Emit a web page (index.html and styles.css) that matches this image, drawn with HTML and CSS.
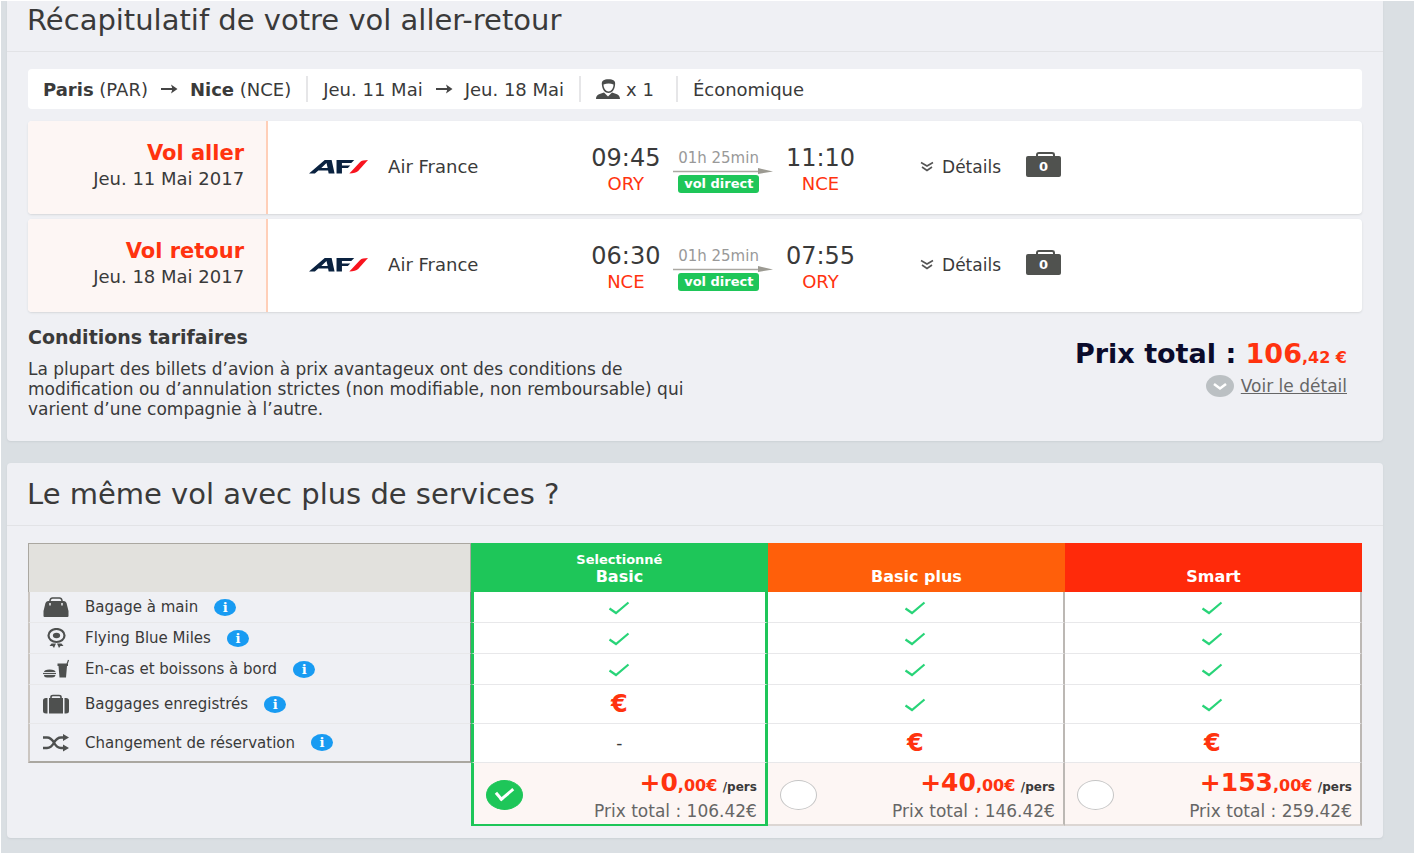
FILE: index.html
```html
<!DOCTYPE html>
<html lang="fr">
<head>
    <meta charset="UTF-8">
    <title>Récapitulatif de votre vol</title>
    <link rel="stylesheet" href="styles.css">
</head>
<body>

<!-- icons -->
<svg class="sprite" aria-hidden="true">
    <symbol id="arrow" viewBox="0 0 18 12">
        <path d="M1 6H14" stroke="#444" stroke-width="2"/>
        <path d="M11 1.500L17.500 6L11 10.500L12.500 6Z" fill="#444"/>
    </symbol>
    <symbol id="person" viewBox="0 0 24 20">
        <path d="M6 6.500C5 1.500 8 .3 12.500 .3C17 .3 20 1.500 19 6.500C18.500 11 16 14 12.500 14C9 14 6.500 11 6 6.500Z" fill="#4a4c4b"/>
        <path d="M7.500 5.500C11 4.200 14.500 4.200 17.500 5.500C17.500 9.500 15 12.500 12.500 12.500C10 12.500 7.500 9.500 7.500 5.500Z" fill="#fff"/>
        <path d="M0 20C0 15.500 4 14.800 8 13.500L12 17.500L16 13.500C20 14.800 24 15.500 24 20Z" fill="#4a4c4b"/>
    </symbol>
    <symbol id="airfrance" viewBox="0 0 60 14">
        <path d="M0 13.500L16 0H23L26 13.500H20L19.400 10.500H9.500L6 13.500ZM12.500 8H19L17.800 3Z" fill="#0a2240" fill-rule="evenodd"/>
        <path d="M28 0H46L43 3H33.500V5.500H42L39.500 8H33.500V13.500H28Z" fill="#0a2240"/>
        <path d="M41 13.500L52 2Q54 0 60 0L50 11Q47.500 13.500 41 13.500Z" fill="#f8141e"/>
    </symbol>
    <symbol id="chevrons" viewBox="0 0 14 12">
        <path d="M1 1.500L7 5L13 1.500M2 6L7 9.500L12 6" fill="none" stroke="#555" stroke-width="1.600"/>
    </symbol>
    <symbol id="line-arrow" viewBox="0 0 100 8">
        <path d="M0 4.500H86" stroke="#aaa8a2" stroke-width="1.500"/>
        <path d="M85 1L100 4.500L85 7Z" fill="#9c9a92"/>
    </symbol>
    <symbol id="check" viewBox="0 0 22 14">
        <path d="M1.500 7.500L8 12L20.500 1.500" fill="none" stroke="#28d478" stroke-width="2.200"/>
    </symbol>
    <symbol id="handbag" viewBox="0 0 25 20">
        <path d="M6.500 6V3.500Q7 1 9 1H16Q18 1 18.500 3.500V6" fill="none" stroke="#4e504f" stroke-width="1.500"/>
        <path d="M5 4H20Q23 4 23.500 8L25 14V19Q25 20 24 20H1Q0 20 0 19V14L1.500 8Q2 4 5 4Z" fill="#4e504f"/>
        <path d="M6.500 6V8.500M18.500 6V8.500" stroke="#eff0f4" stroke-width="1.500"/>
    </symbol>
    <symbol id="medal" viewBox="0 0 25 20">
        <ellipse cx="13" cy="7.500" rx="8" ry="6.500" fill="none" stroke="#4e504f" stroke-width="2.200"/>
        <ellipse cx="13" cy="7.500" rx="3.600" ry="2.800" fill="#4e504f"/>
        <path d="M8 15.500L6 18H9L10.500 20L12.500 15.500M18 15.500L20 18H17L15.500 20L13.500 15.500" fill="#4e504f"/>
    </symbol>
    <symbol id="snack" viewBox="0 0 26 18">
        <path d="M1 12Q1 9.500 6.500 9.500Q12.500 9.500 12.500 12Z" fill="#4e504f"/>
        <path d="M0 13.500H13" stroke="#4e504f" stroke-width="1.200"/>
        <path d="M1 15H12.500Q12 17.500 9 17.500H4Q1 17.500 1 15Z" fill="#4e504f"/>
        <path d="M14.500 3.500H25V6H24L23 17.500H16.500L15.500 6H14.500Z" fill="#4e504f"/>
        <path d="M24 4L25.500 0" stroke="#4e504f" stroke-width="1.200"/>
    </symbol>
    <symbol id="luggage" viewBox="0 0 26 19">
        <path d="M8 4V2.500Q8 1 10 1H16Q18 1 18 2.500V4" fill="none" stroke="#4e504f" stroke-width="1.600"/>
        <path d="M6 3.500H20V19H6Z" fill="#4e504f"/>
        <path d="M4.500 3.500H3Q0 3.500 0 6V16.500Q0 19 3 19H4.500ZM21.500 3.500H23Q26 3.500 26 6V16.500Q26 19 23 19H21.500Z" fill="#4e504f"/>
    </symbol>
    <symbol id="shuffle" viewBox="0 0 26 18">
        <path d="M0 3.500H4C12 3.500 10 14 18 14H21M0 14H4C12 14 10 3.500 18 3.500H21" fill="none" stroke="#4e504f" stroke-width="2.400"/>
        <path d="M20 0L26 3.500L20 7ZM20 10.500L26 14L20 17.500Z" fill="#4e504f"/>
    </symbol>
</svg>

<main>

    <section class="panel panel-first">
        <h1 class="panel-title">Récapitulatif de votre vol aller-retour</h1>
        <div class="panel-body">

            <div class="search-bar">
                <div class="search-item">
                    <span><strong>Paris</strong> (PAR)</span>
                    <svg class="icon-arrow"><use href="#arrow"/></svg>
                    <span><strong>Nice</strong> (NCE)</span>
                </div>
                <div class="search-item">
                    <span>Jeu. 11 Mai</span>
                    <svg class="icon-arrow"><use href="#arrow"/></svg>
                    <span>Jeu. 18 Mai</span>
                </div>
                <div class="search-item passengers">
                    <svg class="icon-person"><use href="#person"/></svg>
                    <span>x 1</span>
                </div>
                <div class="search-item">Économique</div>
            </div>

            <div class="flight">
                <div class="flight-day">
                    <h2>Vol aller</h2>
                    <p>Jeu. 11 Mai 2017</p>
                </div>
                <div class="airline">
                    <svg class="logo"><use href="#airfrance"/></svg>
                    <span>Air France</span>
                </div>
                <div class="route">
                    <div class="stop"><time>09:45</time><span>ORY</span></div>
                    <div class="duration">
                        <span>01h 25min</span>
                        <svg class="line-arrow"><use href="#line-arrow"/></svg>
                        <span class="direct">vol direct</span>
                    </div>
                    <div class="stop"><time>11:10</time><span>NCE</span></div>
                </div>
                <div class="extras">
                    <button type="button" class="details">
                        <svg class="icon-chevrons"><use href="#chevrons"/></svg>
                        Détails
                    </button>
                    <span class="suitcase">0</span>
                </div>
            </div>

            <div class="flight">
                <div class="flight-day">
                    <h2>Vol retour</h2>
                    <p>Jeu. 18 Mai 2017</p>
                </div>
                <div class="airline">
                    <svg class="logo"><use href="#airfrance"/></svg>
                    <span>Air France</span>
                </div>
                <div class="route">
                    <div class="stop"><time>06:30</time><span>NCE</span></div>
                    <div class="duration">
                        <span>01h 25min</span>
                        <svg class="line-arrow"><use href="#line-arrow"/></svg>
                        <span class="direct">vol direct</span>
                    </div>
                    <div class="stop"><time>07:55</time><span>ORY</span></div>
                </div>
                <div class="extras">
                    <button type="button" class="details">
                        <svg class="icon-chevrons"><use href="#chevrons"/></svg>
                        Détails
                    </button>
                    <span class="suitcase">0</span>
                </div>
            </div>

            <div class="summary">
                <div class="conditions">
                    <h3>Conditions tarifaires</h3>
                    <p>La plupart des billets d’avion à prix avantageux ont des conditions de<br>
                        modification ou d’annulation strictes (non modifiable, non remboursable) qui<br>
                        varient d’une compagnie à l’autre.</p>
                </div>
                <div class="total">
                    <p class="total-price">Prix total : <span class="red">106<small>,42 €</small></span></p>
                    <a href="#" class="see-details">
                        <svg class="icon-down" viewBox="0 0 28 22">
                            <ellipse cx="14" cy="11" rx="14" ry="11" fill="#bbc0c3"/>
                            <path d="M8 9L14 13.500L20 9" fill="none" stroke="#fff" stroke-width="2.500"/>
                        </svg>
                        <span>Voir le détail</span>
                    </a>
                </div>
            </div>
        </div>
    </section>

    <section class="panel">
        <h1 class="panel-title">Le même vol avec plus de services ?</h1>
        <div class="panel-body">
            <table class="offers">
                <thead>
                <tr>
                    <td class="corner"></td>
                    <th scope="col" class="basic"><small>Selectionné</small>Basic</th>
                    <th scope="col" class="plus">Basic plus</th>
                    <th scope="col" class="smart">Smart</th>
                </tr>
                </thead>
                <tbody>
                <tr>
                    <th scope="row">
                        <div class="service">
                            <svg><use href="#handbag"/></svg>
                            <span>Bagage à main</span>
                            <button type="button" class="info">i</button>
                        </div>
                    </th>
                    <td class="selected"><svg class="check"><use href="#check"/></svg></td>
                    <td><svg class="check"><use href="#check"/></svg></td>
                    <td><svg class="check"><use href="#check"/></svg></td>
                </tr>
                <tr>
                    <th scope="row">
                        <div class="service">
                            <svg><use href="#medal"/></svg>
                            <span>Flying Blue Miles</span>
                            <button type="button" class="info">i</button>
                        </div>
                    </th>
                    <td class="selected"><svg class="check"><use href="#check"/></svg></td>
                    <td><svg class="check"><use href="#check"/></svg></td>
                    <td><svg class="check"><use href="#check"/></svg></td>
                </tr>
                <tr>
                    <th scope="row">
                        <div class="service">
                            <svg><use href="#snack"/></svg>
                            <span>En-cas et boissons à bord</span>
                            <button type="button" class="info">i</button>
                        </div>
                    </th>
                    <td class="selected"><svg class="check"><use href="#check"/></svg></td>
                    <td><svg class="check"><use href="#check"/></svg></td>
                    <td><svg class="check"><use href="#check"/></svg></td>
                </tr>
                <tr class="tall">
                    <th scope="row">
                        <div class="service">
                            <svg><use href="#luggage"/></svg>
                            <span>Baggages enregistrés</span>
                            <button type="button" class="info">i</button>
                        </div>
                    </th>
                    <td class="selected euro">€</td>
                    <td><svg class="check"><use href="#check"/></svg></td>
                    <td><svg class="check"><use href="#check"/></svg></td>
                </tr>
                <tr class="tall last">
                    <th scope="row">
                        <div class="service">
                            <svg><use href="#shuffle"/></svg>
                            <span>Changement de réservation</span>
                            <button type="button" class="info">i</button>
                        </div>
                    </th>
                    <td class="selected">-</td>
                    <td class="euro">€</td>
                    <td class="euro">€</td>
                </tr>
                </tbody>
                <tfoot>
                <tr>
                    <td class="empty"></td>
                    <td class="selected">
                        <label class="choice">
                            <input type="radio" name="offer" checked>
                            <span class="choice-price">
                                <span><b>+0<small>,00€</small></b> <i>/pers</i></span>
                                <span>Prix total : 106.42€</span>
                            </span>
                        </label>
                    </td>
                    <td>
                        <label class="choice">
                            <input type="radio" name="offer">
                            <span class="choice-price">
                                <span><b>+40<small>,00€</small></b> <i>/pers</i></span>
                                <span>Prix total : 146.42€</span>
                            </span>
                        </label>
                    </td>
                    <td>
                        <label class="choice">
                            <input type="radio" name="offer">
                            <span class="choice-price">
                                <span><b>+153<small>,00€</small></b> <i>/pers</i></span>
                                <span>Prix total : 259.42€</span>
                            </span>
                        </label>
                    </td>
                </tr>
                </tfoot>
            </table>
        </div>
    </section>

</main>
</body>
</html>
```
FILE: styles.css
```css
* {
    box-sizing: border-box;
}

body {
    margin: 0;
    background-color: #dadfe3;
    border: 1px solid #fff;
    border-right: 0;
    font-family: "DejaVu Sans", Verdana, sans-serif;
    font-size: 17px;
    color: #3a3a3a;
}

h1, h2, h3, p {
    margin: 0;
}

button {
    font-family: inherit;
    border: 0;
    padding: 0;
    cursor: pointer;
}

.sprite {
    display: none;
}

main {
    padding: 0 31px 15px 6px;
}

/* panels */
.panel {
    background-color: #eff0f4;
    border-radius: 4px;
    box-shadow: 0 1px 2px #ccd1d5;
    margin-bottom: 22px;
}

.panel:last-child {
    margin-bottom: 0;
}

.panel-first {
    border-radius: 0 0 4px 4px;
}

.panel-title {
    font-size: 29px;
    line-height: 62px;
    font-weight: normal;
    padding: 0 20px;
    border-bottom: 1px solid #e2e3e6;
}

.panel-first .panel-title {
    line-height: 38px;
    padding-bottom: 12px;
}

.panel-body {
    padding: 17px 21px 12px;
}

/* search bar */
.search-bar {
    display: flex;
    align-items: center;
    height: 40px;
    background-color: #fff;
    border-radius: 4px;
    margin-bottom: 12px;
    font-size: 18px;
}

.search-item {
    display: flex;
    align-items: center;
    gap: 12px;
    height: 26px;
    padding: 0 15px;
    border-right: 2px solid #e6e6e8;
}

.search-item:last-child {
    border-right: 0;
}

.icon-arrow {
    width: 18px;
    height: 12px;
}

.passengers {
    gap: 6px;
    padding-right: 22px;
}

.icon-person {
    width: 24px;
    height: 20px;
}

/* flights */
.flight {
    display: grid;
    grid-template-columns: 18% 24% 20% 1fr;
    align-items: center;
    background-color: #fff;
    border-radius: 4px;
    box-shadow: 0 1px 2px #d5d7da;
    margin-bottom: 5px;
}

.flight-day {
    background-color: #fdf6f4;
    border-right: 2px solid #ffcfb8;
    border-radius: 4px 0 0 4px;
    padding: 20px 22px 23px;
    text-align: right;
    line-height: 25px;
}

.flight-day h2 {
    font-size: 21px;
    color: #ff330f;
}

.flight-day p {
    font-size: 18px;
}

.airline {
    display: flex;
    align-items: center;
    gap: 20px;
    padding: 0 0 2px 41px;
    font-size: 18px;
}

.logo {
    width: 59px;
    height: 14px;
}

.route {
    display: flex;
    justify-content: space-between;
    align-items: center;
    padding: 6px 0 0 3px;
}

.stop {
    display: flex;
    flex-direction: column;
    align-items: center;
    line-height: 26px;
}

.stop time {
    font-size: 24px;
}

.stop span {
    font-size: 18px;
    color: #ff330f;
}

.duration {
    display: flex;
    flex-direction: column;
    align-items: flex-start;
    font-size: 15px;
    line-height: 18px;
    color: #999;
}

.duration span {
    margin-left: 5px;
}

.line-arrow {
    width: 100px;
    height: 8px;
}

.direct {
    background-color: #1ec659;
    color: #fff;
    font-weight: bold;
    font-size: 13px;
    border-radius: 3px;
    padding: 0 6px;
}

.extras {
    display: flex;
    align-items: center;
    gap: 25px;
    padding: 0 0 2px 65px;
}

.details {
    display: flex;
    align-items: center;
    gap: 8px;
    background: none;
    font-size: 17px;
    color: #3a3a3a;
}

.icon-chevrons {
    width: 14px;
    height: 12px;
}

.suitcase {
    position: relative;
    width: 35px;
    background-color: #50524f;
    border-radius: 2px;
    color: #fff;
    font-size: 13px;
    font-weight: bold;
    line-height: 21px;
    text-align: center;
}

.suitcase::before {
    content: "";
    position: absolute;
    left: 10px;
    top: -4px;
    width: 15px;
    height: 5px;
    border: 2px solid #50524f;
    border-bottom: 0;
    border-radius: 3px 3px 0 0;
}

/* conditions and price */
.summary {
    display: flex;
    justify-content: space-between;
    padding: 8px 15px 10px 0;
}

.conditions h3 {
    font-size: 19px;
    line-height: 24px;
    margin-bottom: 10px;
}

.conditions p {
    line-height: 20px;
}

.total {
    display: flex;
    flex-direction: column;
    align-items: flex-end;
    padding-top: 12px;
}

.total-price {
    font-size: 27px;
    line-height: 34px;
    font-weight: bold;
    color: #0b0b2b;
}

.total-price small {
    font-size: 16px;
}

.red {
    color: #ff330f;
}

.see-details {
    display: flex;
    align-items: center;
    gap: 7px;
    color: #666;
}

.icon-down {
    width: 28px;
    height: 22px;
}

/* offers */
.offers {
    width: 100%;
    table-layout: fixed;
    border-collapse: separate;
    border-spacing: 0;
    text-align: center;
}

.offers th, .offers td {
    padding: 0;
}

.offers thead th {
    height: 49px;
    vertical-align: bottom;
    padding-bottom: 6px;
    font-size: 16px;
    line-height: 18px;
    color: #fff;
}

.offers thead small {
    display: block;
    font-size: 13px;
    line-height: 16px;
}

.offers .corner {
    width: 33.2%;
    background-color: #e2e1dd;
    border: 1px solid #aaa7a0;
    border-bottom: 0;
}

.offers .basic {
    background-color: #1ec659;
}

.offers .plus {
    background-color: #ff5f0a;
}

.offers .smart {
    background-color: #ff2a0a;
}

.offers tbody th {
    border-left: 2px solid #cbc6c1;
    border-right: 1px solid #888;
    border-bottom: 1px solid #e8e8ea;
    font-weight: normal;
}

.offers tbody td {
    height: 31px;
    background-color: #fff;
    border-right: 2px solid #bcb8b4;
    border-bottom: 1px solid #e8e8ea;
}

.offers .tall td {
    height: 39px;
}

.offers .last th {
    border-bottom: 2px solid #aaa7a0;
}

.offers .selected {
    border-left: 3px solid #1ec659;
    border-right: 3px solid #1ec659;
}

.service {
    display: flex;
    align-items: center;
    padding-left: 13px;
}

.service svg {
    width: 26px;
    height: 20px;
    margin-right: 16px;
}

.service span {
    font-size: 15px;
    line-height: 20px;
    margin-right: 16px;
}

.info {
    width: 22px;
    height: 17px;
    border-radius: 50%;
    background-color: #189bf2;
    color: #fff;
    font-family: "DejaVu Serif", serif;
    font-size: 13px;
    font-weight: bold;
    line-height: 17px;
}

.check {
    width: 22px;
    height: 14px;
    vertical-align: middle;
}

.offers .euro {
    font-size: 24px;
    line-height: 24px;
    font-weight: bold;
    color: #ff330f;
}

.offers tfoot td {
    height: 63px;
    background-color: #fdf6f4;
    border-right: 2px solid #bcb8b4;
    border-bottom: 2px solid #dcd6d3;
}

.offers tfoot .selected {
    border-right: 3px solid #1ec659;
    border-bottom: 2px solid #1ec659;
}

.offers tfoot .empty {
    background: none;
    border: 0;
}

.choice {
    display: flex;
    align-items: center;
    justify-content: space-between;
    padding: 2px 8px 0 12px;
}

.choice input {
    appearance: none;
    flex: none;
    display: grid;
    place-items: center;
    width: 37px;
    height: 30px;
    margin: 0;
    background-color: #fff;
    border: 1px solid #c5c5c5;
    border-radius: 50%;
}

.choice input:checked {
    background-color: #1ec659;
    border-color: #1ec659;
}

.choice input:checked::before {
    content: "";
    width: 14px;
    height: 7px;
    border: solid #fff;
    border-width: 0 0 3px 3px;
    transform: rotate(-40deg);
    margin-bottom: 5px;
}

.choice-price {
    display: flex;
    flex-direction: column;
    align-items: flex-end;
    padding-top: 6px;
    line-height: 24px;
    color: #666;
}

.choice b {
    font-size: 25px;
    line-height: 20px;
    color: #ff330f;
}

.choice b small {
    font-size: 16px;
}

.choice i {
    font-size: 12px;
    font-style: normal;
    font-weight: bold;
    color: #3a3a3a;
}
```
